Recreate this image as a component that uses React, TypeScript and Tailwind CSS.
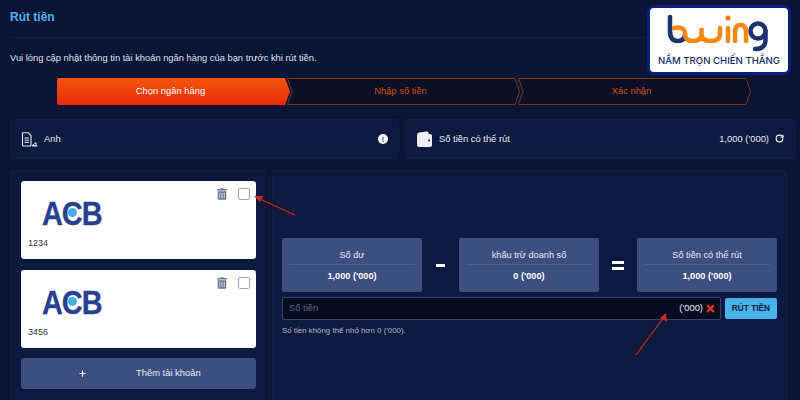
import { Plus, RotateCw, X } from 'lucide-react';
import { FaTrashAlt } from 'react-icons/fa';

const font = { fontFamily: '"Liberation Sans", Arial, sans-serif' };

const Step = ({ label, active, className }: { label: string; active?: boolean; className?: string }) => (
  <div className={`relative flex h-[27px] w-[233px] items-center justify-center pr-[6px] text-[9.4px] ${active ? 'text-white' : 'text-[#d4500f]'} ${className ?? ''}`}>
    <svg className="absolute inset-0" width="233" height="27" viewBox="0 0 233 27">
      <defs>
        <linearGradient id="stepfill" x1="0" y1="0" x2="0" y2="1">
          <stop offset="0" stopColor="#f2560b" />
          <stop offset="1" stopColor="#ea2a08" />
        </linearGradient>
      </defs>
      {active ? (
        <path d="M2 0H228L233 13.5L228 27H2Q0 27 0 25V2Q0 0 2 0Z" fill="url(#stepfill)" />
      ) : (
        <path d="M.5 .5H228L232.5 13.5L228 26.5H.5L5 13.5Z" fill="#0a0f26" stroke="#7c3413" />
      )}
    </svg>
    <span className="relative">{label}</span>
  </div>
);

const AcbLogo = () => (
  <div className="relative h-[30px] w-[60px]">
    <span className="block origin-left scale-x-[.85] whitespace-nowrap text-[34px] font-bold leading-[30px] tracking-[-1.2px] text-[#27408f] [-webkit-text-stroke:0.3px_#27408f]">ACB</span>
    <div className="absolute left-[26px] top-[10px] h-[9px] w-[9px] rounded-full bg-[#46ade9]" />
  </div>
);

const BankCard = ({ num, className }: { num: string; className: string }) => (
  <div className={`relative flex w-[235px] flex-col rounded-[3px] bg-white pl-[7px] ${className}`}>
    <div className="ml-[14px] mt-[17px]"><AcbLogo /></div>
    <div className="mt-[9px] text-[9px] text-[#333]">{num}</div>
    <div className="absolute right-[6px] top-[7px] flex items-center gap-[11px]">
      <FaTrashAlt className="h-[12px] w-[10px] text-[#6b7696]" />
      <div className="h-[12px] w-[12px] rounded-[2px] border-[1.5px] border-[#98a2bc] bg-white" />
    </div>
  </div>
);

const CalcBox = ({ title, value, className }: { title: string; value: string; className?: string }) => (
  <div className={`flex h-[54px] w-[140px] flex-col items-center rounded-[2px] bg-[#3d4f80] px-[7px] text-[9.2px] text-[#e7eaf3] ${className ?? ''}`}>
    <div className="flex h-[27px] w-full items-end justify-center border-b border-[#4d5f90] pb-[1px]">{title}</div>
    <div className="mt-[5px] font-bold text-white">{value}</div>
  </div>
);

const Arrow = ({ x1, y1, x2, y2, head }: { x1: number; y1: number; x2: number; y2: number; head: string }) => (
  <g>
    <line x1={x1} y1={y1} x2={x2} y2={y2} stroke="#d3261a" strokeWidth="1.2" />
    <polygon points={head} fill="#d3261a" />
  </g>
);

export default function App() {
  return (
    <div className="relative h-[400px] w-[800px] overflow-hidden bg-[#0a1535] text-white" style={font}>
      <h1 className="flex h-[37px] items-center px-[10px] pb-[3px] text-[12px] font-bold text-[#4eb2e8]">Rút tiền</h1>
      <div className="mx-[10px] border-t border-[#101e47]" />
      <p className="mt-[14px] px-[10px] text-[9.33px] leading-[12px] text-[#dfe3ee]">Vui lòng cập nhật thông tin tài khoản ngân hàng của bạn trước khi rút tiền.</p>

      <div className="mt-[14px] flex pl-[57px]">
        <Step active label="Chọn ngân hàng" />
        <Step className="-ml-[3px]" label="Nhập số tiền" />
        <Step className="-ml-[2px]" label="Xác nhận" />
      </div>

      <div className="mt-[14px] flex gap-[7px] pl-[10px] pr-[5px]">
        <div className="flex h-[40px] w-[389px] items-center justify-between rounded-[3px] border border-[#101e47] bg-[#0c1a40] px-[10px] text-[9.4px] text-[#e7eaf3]">
          <div className="flex items-center gap-[6px]">
            <svg width="17" height="15" viewBox="0 0 17 15" fill="none">
              <path d="M1.5 1.5Q1.5.7 2.3.7H7L10 3.5V13.2Q10 14 9.2 14H2.3Q1.5 14 1.5 13.2Z" stroke="#e7eaf3" strokeWidth="1.1" />
              <path d="M3.5 6H8M3.5 8.2H8M3.5 10.4H8" stroke="#e7eaf3" strokeWidth="1" />
              <path d="M11 13.6L15 10.5V13.6ZM11.5 14H16.5" stroke="#e7eaf3" strokeWidth="1" />
            </svg>
            <span>Anh</span>
          </div>
          <div className="flex h-[10px] w-[10px] items-center justify-center rounded-full bg-white text-[7px] font-bold leading-none text-[#0c1a40]">!</div>
        </div>
        <div className="flex h-[40px] w-[389px] items-center justify-between rounded-[3px] border border-[#101e47] bg-[#0c1a40] px-[10px] text-[9.4px] text-[#e7eaf3]">
          <div className="flex items-center gap-[7px]">
            <svg width="15" height="16" viewBox="0 0 15 16">
              <path d="M0 4Q0 2 2 1.5L10 .5Q11.5.5 11.5 2V3H13Q15 3 15 5V14Q15 16 13 16H2Q0 16 0 14Z" fill="#eef0f6" />
              <circle cx="12" cy="9.5" r="1" fill="#0c1a40" />
            </svg>
            <span>Số tiền có thể rút</span>
          </div>
          <div className="flex items-center gap-[6px]">
            <span>1,000 ('000)</span>
            <RotateCw className="h-[9px] w-[9px] text-white" strokeWidth={3} />
          </div>
        </div>
      </div>

      <div className="mt-[11px] flex gap-[7px] px-[10px]">
        <div className="flex h-[240px] w-[255px] flex-col rounded-[3px] border border-[#101e47] bg-[#0c1a40] px-[10px] pt-[10px]">
          <BankCard num="1234" className="h-[78px]" />
          <BankCard num="3456" className="mt-[11px] h-[78px]" />
          <button className="mt-[10px] flex h-[31px] w-[235px] items-center rounded-[3px] bg-[#3d4f80] pl-[57px] text-[9.4px] text-[#e7eaf3]">
            <Plus className="h-[9px] w-[9px] text-white" strokeWidth={3} />
            <span className="ml-[49px]">Thêm tài khoản</span>
          </button>
        </div>

        <div className="h-[240px] w-[515px] rounded-[3px] border border-[#101e47] bg-[#0c1a40] px-[9px] pt-[67px]">
          <div className="flex items-center">
            <CalcBox title="Số dư" value="1,000 ('000)" />
            <div className="ml-[14px] h-[3px] w-[9px] bg-white" />
            <CalcBox className="ml-[14px]" title="khấu trừ doanh số" value="0 ('000)" />
            <div className="ml-[13px] flex flex-col gap-[3px]">
              <div className="h-[3px] w-[12px] bg-white" />
              <div className="h-[3px] w-[12px] bg-white" />
            </div>
            <CalcBox className="ml-[13px]" title="Số tiền có thể rút" value="1,000 ('000)" />
          </div>
          <div className="mt-[5px] flex items-center gap-[4px]">
            <div className="flex h-[23px] w-[439px] items-center justify-between rounded-[2px] border border-[#34436e] bg-[#060b20] pl-[6px] pr-[4px] text-[9.4px]">
              <span className="text-[#5a6685]">Số tiền</span>
              <div className="flex items-center gap-[2px] text-[#e7eaf3]">
                <span>('000)</span>
                <X className="h-[11px] w-[11px] text-[#e8321e]" strokeWidth={5} />
              </div>
            </div>
            <button className="h-[21px] w-[52px] rounded-[2px] bg-[#4ab2ea] text-[8.3px] font-bold text-[#10203f]">RÚT TIỀN</button>
          </div>
          <p className="mt-[5px] text-[7.9px] leading-[12px] text-[#b4bbcf]">Số tiền không thể nhỏ hơn 0 ('000).</p>
        </div>
      </div>

      <svg className="pointer-events-none absolute inset-0" width="800" height="400">
        <Arrow x1={295} y1={215} x2={260} y2={199} head="254,196 263,196 260,202" />
        <Arrow x1={636} y1={355} x2={664} y2={317} head="666,313 667,322 660,318" />
      </svg>

      <div className="absolute left-[647px] top-[5px] flex h-[70px] w-[144px] flex-col items-center rounded-[7px] border-[3px] border-[#0a1f7c] bg-white">
        <svg width="120" height="45" viewBox="0 0 120 45" className="mt-[2px]" fill="none" strokeLinecap="round">
          <path d="M11 7V21Q11 31 18.5 31Q26 31 26 24" stroke="#1f3270" strokeWidth="4.5" />
          <path d="M15 18Q26 16 26 24Q26 31 33.5 31Q42.5 31 42.5 24V18V24Q42.5 31 51.5 31Q61 31 61 24V18" stroke="#f28a0f" strokeWidth="4.5" />
          <path d="M69 18V31M76 31V22Q76 15 81.5 15Q87 15 87 22V31" stroke="#f28a0f" strokeWidth="4.5" />
          <circle cx="69" cy="8" r="2.6" fill="#ef7d1b" />
          <circle cx="99" cy="21" r="7.5" stroke="#1f3270" strokeWidth="4.5" />
          <path d="M106.5 21V30Q106.5 39 96 39" stroke="#1f3270" strokeWidth="4.5" />
        </svg>
        <div className="whitespace-nowrap text-[9.6px] font-medium leading-[12px] text-[#13286c]" style={{ fontFamily: 'Inter, sans-serif' }}>NẮM TRỌN CHIẾN THẮNG</div>
      </div>
    </div>
  );
}
